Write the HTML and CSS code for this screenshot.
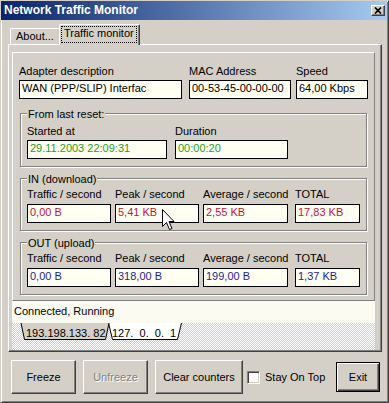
FILE: index.html
```html
<!DOCTYPE html>
<html>
<head>
<meta charset="utf-8">
<title>Network Traffic Monitor</title>
<link rel="stylesheet" href="styles.css">
</head>
<body>
<div class="window">
  <div class="titlebar">
    <span class="title">Network Traffic Monitor</span>
    <span class="close"><svg width="8" height="7" viewBox="0 0 8 7"><path d="M1 0.5 L7 6.5 M7 0.5 L1 6.5" stroke="#000" stroke-width="1.7" fill="none"/></svg></span>
  </div>
  <div class="tabstrip">
    <div class="tab">About...</div>
    <div class="tab active"><span class="focus">Traffic monitor</span></div>
  </div>
  <div class="panel">
    <div class="frame">
      <div class="fields">
        <div class="field w163"><div class="label">Adapter description</div><div class="edit">WAN (PPP/SLIP) Interfac</div></div>
        <div class="field w102 ml7"><div class="label">MAC Address</div><div class="edit">00-53-45-00-00-00</div></div>
        <div class="field w72 ml5"><div class="label">Speed</div><div class="edit">64,00 Kbps</div></div>
      </div>
      <div class="group g-reset">
        <div class="legend">From last reset:</div>
        <div class="fields">
          <div class="field w140"><div class="label">Started at</div><div class="edit green">29.11.2003 22:09:31</div></div>
          <div class="field w113 ml8"><div class="label">Duration</div><div class="edit green">00:00:20</div></div>
        </div>
      </div>
      <div class="group g-traffic">
        <div class="legend">IN (download)</div>
        <div class="fields">
          <div class="field w84"><div class="label">Traffic / second</div><div class="edit red">0,00 B</div></div>
          <div class="field w84 ml4"><div class="label">Peak / second</div><div class="edit red">5,41 KB</div></div>
          <div class="field w85 ml4"><div class="label">Average / second</div><div class="edit red">2,55 KB</div></div>
          <div class="field w65 ml7"><div class="label">TOTAL</div><div class="edit red">17,83 KB</div></div>
        </div>
      </div>
      <div class="group g-traffic">
        <div class="legend">OUT (upload)</div>
        <div class="fields">
          <div class="field w84"><div class="label">Traffic / second</div><div class="edit blue">0,00 B</div></div>
          <div class="field w84 ml4"><div class="label">Peak / second</div><div class="edit blue">318,00 B</div></div>
          <div class="field w85 ml4"><div class="label">Average / second</div><div class="edit blue">199,00 B</div></div>
          <div class="field w65 ml7"><div class="label">TOTAL</div><div class="edit blue">1,37 KB</div></div>
        </div>
      </div>
    </div>
    <div class="status">Connected, Running</div>
    <div class="sheets">
      <svg width="363" height="27" viewBox="0 0 363 27">
        <polygon points="96.5,0 100.5,16.5 165.5,16.5 169.5,0" fill="#fff"/>
        <polyline points="96.5,0 100.5,16.5 165.5,16.5 169.5,0" fill="none" stroke="#000" stroke-width="1"/>
        <polygon points="9,0 12.5,16.5 93.5,16.5 97,0" fill="#D4D0C8"/>
        <polyline points="9,0 12.5,16.5 93.5,16.5 97,0" fill="none" stroke="#000" stroke-width="1"/>
        <text class="sheet-text" x="14" y="14">193.198.133. 82</text>
        <text class="sheet-text" x="100" y="14">127.  0.  0.  1</text>
      </svg>
    </div>
  </div>
  <div class="buttons">
    <div class="btn w65">Freeze</div>
    <div class="btn w65 disabled ml7">Unfreeze</div>
    <div class="btn w88 ml7">Clear counters</div>
    <div class="check"></div>
    <div class="check-label">Stay On Top</div>
    <div class="btn default exit">Exit</div>
  </div>
  <svg class="cursor" width="13" height="22" viewBox="0 0 13 22">
    <path d="M0.5 0.5 L0.5 17.5 L4.5 13.5 L7.5 20.5 L10 19.5 L7 12.5 L12 12.5 Z" fill="#fff" stroke="#000" stroke-width="1"/>
  </svg>
</div>
</body>
</html>
```

FILE: styles.css
```css
* { box-sizing: border-box; }
html, body { margin: 0; padding: 0; }
body {
  width: 389px;
  height: 403px;
  overflow: hidden;
  background: #D4D0C8;
  font-family: "Liberation Sans", Arial, sans-serif;
  font-size: 11px;
  color: #000;
}
.window {
  position: relative;
  width: 389px;
  height: 403px;
  border: 1px solid;
  border-color: #D4D0C8 #404040 #404040 #D4D0C8;
  box-shadow: inset 1px 1px #fff, inset -1px -1px #808080;
  background: #D4D0C8;
}
.titlebar {
  height: 19px;
  margin-right: 1px;
  display: flex;
  align-items: center;
  justify-content: space-between;
  padding: 0 2px 0 3px;
  background: linear-gradient(to right, #0A246A, #A6CAF0);
  color: #fff;
  font-weight: bold;
  font-size: 12px;
  line-height: 19px;
}
.close {
  width: 14px;
  height: 11px;
  display: flex;
  align-items: center;
  justify-content: center;
  background: #D4D0C8;
  border: 1px solid;
  border-color: #fff #404040 #404040 #fff;
  box-shadow: inset -1px -1px #808080;
}
.tabstrip {
  height: 24px;
  display: flex;
  align-items: flex-end;
  padding-left: 9px;
}
.tab {
  height: 16px;
  width: 49px;
  padding-left: 5px;
  line-height: 14px;
  border-top: 1px solid #fff;
  border-left: 1px solid #fff;
  border-radius: 2px 2px 0 0;
  background: #D4D0C8;
}
.tab.active {
  position: relative;
  z-index: 1;
  width: 81px;
  height: 21px;
  margin-bottom: -1px;
  padding-left: 1px;
  padding-top: 1px;
  border-right: 1px solid #404040;
  box-shadow: inset -1px 0 #808080;
}
.focus {
  display: inline-block;
  border: 1px dotted #000;
  padding: 0 2px 2px;
  line-height: 13px;
}
.panel {
  margin-left: 7px;
  width: 374px;
  height: 308px;
  padding-top: 7px;
  border: 1px solid;
  border-color: #fff #404040 #404040 #fff;
  box-shadow: inset -1px -1px #808080;
}
.frame {
  margin-left: 3px;
  width: 363px;
  height: 249px;
  padding: 12px 0 0 6px;
  border: 1px solid;
  border-color: #fff #808080 #808080 #fff;
}
.fields { display: flex; }
.field { flex: none; }
.label {
  line-height: 13px;
  margin-bottom: 2px;
  white-space: nowrap;
}
.edit {
  height: 19px;
  border: 1px solid #000;
  background: #FFFFF2;
  padding: 0 0 2px 2px;
  line-height: 15px;
  white-space: nowrap;
  overflow: hidden;
}
.green { color: #1E9E1E; }
.red { color: #C2143C; }
.blue { color: #1C1C9A; }
.w163 { width: 163px; }
.w102 { width: 102px; }
.w72 { width: 72px; }
.w140 { width: 140px; }
.w113 { width: 113px; }
.w84 { width: 84px; }
.w85 { width: 85px; }
.w65 { width: 65px; }
.w88 { width: 88px; }
.ml4 { margin-left: 4px; }
.ml5 { margin-left: 5px; }
.ml7 { margin-left: 7px; }
.ml8 { margin-left: 8px; }
.group {
  margin-left: 1px;
  width: 347px;
  padding: 0 0 7px 6px;
  border: 1px solid #808080;
  box-shadow: inset 1px 1px #fff, 1px 1px #fff;
}
.g-reset { margin-top: 14px; }
.g-traffic { margin-top: 11px; }
.legend {
  width: fit-content;
  margin-top: -6px;
  padding: 0 1px;
  line-height: 13px;
  background: #D4D0C8;
}
.g-reset .legend { margin-bottom: 4px; }
.g-traffic .legend { margin-bottom: 2px; }
.g-traffic .label { margin-bottom: 3px; }
.status {
  margin-left: 3px;
  width: 363px;
  height: 22px;
  padding: 4px 0 0 2px;
  line-height: 13px;
  background: #FCFBF2;
}
.sheets {
  margin-left: 3px;
  width: 363px;
  height: 27px;
  background: repeating-conic-gradient(#fff 0 25%, #D4D0C8 0 50%) 0 0 / 2px 2px;
}
.sheets svg { display: block; }
.sheet-text {
  font-family: "Liberation Sans", Arial, sans-serif;
  font-size: 11px;
  fill: #000;
  white-space: pre;
}
.buttons {
  margin-top: 8px;
  height: 34px;
  display: flex;
  align-items: center;
  padding-left: 10px;
}
.btn {
  flex: none;
  height: 34px;
  display: flex;
  align-items: center;
  justify-content: center;
  background: #D4D0C8;
  border: 1px solid;
  border-color: #fff #404040 #404040 #fff;
  box-shadow: inset -1px -1px #808080;
  white-space: nowrap;
}
.btn.disabled {
  color: #808080;
  text-shadow: 1px 1px #fff;
}
.btn.default {
  border: 1px solid #000;
  box-shadow: inset 1px 1px #fff, inset -1px -1px #404040, inset -2px -2px #808080;
}
.exit {
  width: 44px;
  height: 30px;
  margin-left: auto;
  margin-right: 8px;
}
.check {
  flex: none;
  width: 13px;
  height: 13px;
  margin-left: 4px;
  background: #fff;
  border: 1px solid;
  border-color: #808080 #fff #fff #808080;
  box-shadow: inset 1px 1px #404040, inset -1px -1px #D4D0C8;
}
.check-label {
  margin-left: 5px;
  white-space: nowrap;
}
.cursor {
  position: absolute;
  left: 161px;
  top: 208px;
}
```
